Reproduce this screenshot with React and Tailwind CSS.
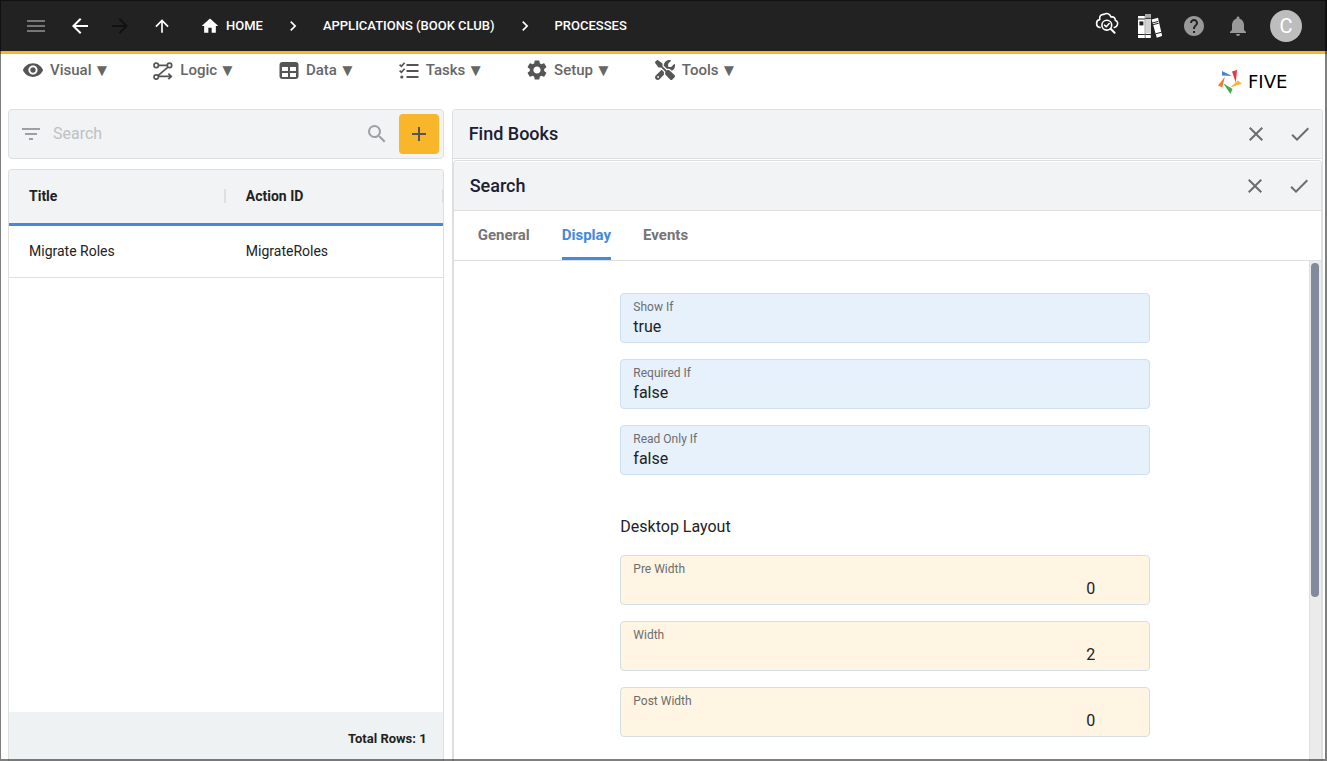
import { useState } from "react";
import {
  MdMenu,
  MdArrowBack,
  MdArrowForward,
  MdArrowUpward,
  MdHome,
  MdChevronRight,
  MdHelp,
  MdNotifications,
  MdFilterList,
  MdSearch,
  MdAdd,
  MdClose,
  MdCheck,
  MdVisibility,
  MdSettings,
} from "react-icons/md";
import { FaScrewdriverWrench } from "react-icons/fa6";

function LogicIcon() {
  return (
    <svg viewBox="0 0 20 20" className="size-5" fill="none" stroke="currentColor" strokeWidth="1.7">
      <circle cx="3.2" cy="5.4" r="2.2" />
      <circle cx="16.5" cy="5.4" r="2.2" />
      <circle cx="3.2" cy="17" r="2.2" />
      <path d="M5.4 5.4h9M15 7.1L5 15.6M5.400 16.400H18M15.400 13.600l2.900 2.800-2.900 2.800" />
    </svg>
  );
}

function DataIcon() {
  return (
    <svg viewBox="0 0 20 20" className="size-5" fill="currentColor">
      <path
        fillRule="evenodd"
        d="M3.500 2h13a3 3 0 0 1 3 3v11a3 3 0 0 1-3 3h-13a3 3 0 0 1-3-3V5a3 3 0 0 1 3-3zM3 7v4h6V7zM11 7v4h6V7zM3 13v4h6v-4zM11 13v4h6v-4z"
      />
    </svg>
  );
}

function TasksIcon() {
  return (
    <svg viewBox="0 0 20 20" className="size-5" fill="none" stroke="currentColor">
      <path strokeWidth="1.7" d="M.6 4.600l1.800 1.700L5.600 2.800M.6 10.600l1.800 1.700 3.200-3.500" />
      <path strokeWidth="2.2" d="M7.500 5h12M7.500 11h12M7.500 17h12" />
      <circle cx="2.800" cy="17" r="1.600" fill="currentColor" stroke="none" />
    </svg>
  );
}

function CloudSearchIcon() {
  return (
    <svg viewBox="-1 2 24 24" className="size-6 overflow-visible" fill="none" stroke="currentColor" strokeWidth="1.6" strokeLinecap="round" strokeLinejoin="round">
      <path d="M5 15.500C2.500 15 1.500 13.200 1.600 11.200C1.700 9.200 3 7.800 4.800 7.600C4 4.200 6.200 2 9 2.400C11.400 .6 15 1.400 16 5C18.800 4.300 20.500 6 20.200 8.200C22.400 9.200 23 11.200 22.300 13C21.800 14.400 20.800 15.200 19.300 15.500" />
      <circle cx="11.800" cy="13.200" r="4.900" />
      <path strokeWidth="2" d="M15.600 16.800l4 3.900" />
      <path d="M9.600 13.200l1.600 1.600 3-3.300" />
    </svg>
  );
}

function BooksIcon() {
  return (
    <svg viewBox="0 0 24 24" className="size-6">
      <path fill="#fff" d="M0 2h6.800v22H0zM7.400 0h5.400v24H7.400zM13.600 5.400l6.400-1.700L24.200 22l-5.400 1.700z" />
      <path fill="#a8a8a8" d="M7.400 0h5.400v4H7.400z" />
      <path fill="#d2d2d2" d="M7.400 4.800h5.400v14.400H7.400z" />
      <path fill="#222" d="M1.400 7.400h4v4h-4z" />
      <path stroke="#222" strokeWidth="1" fill="none" d="M0 5h6.800M0 20.500h6.800M7.400 4.400h5.400M7.400 20.500h5.400M14.300 9l6-1.600M14.700 10.800l6-1.600M17.600 19.800l6-1.600" />
    </svg>
  );
}

function FiveLogo() {
  return (
    <a href="#five" className="flex items-center gap-1.5 text-black">
      <svg viewBox="0 0 24 24" className="size-6">
        <path fill="#3f87db" d="M4 1v4.600L14 6z" />
        <path fill="#e53a3a" d="M14 1.500L19 0l-1.200 12.500z" />
        <path fill="#f8b62a" d="M24 13.500l-4.200-3-8 7.200z" />
        <path fill="#3fab52" d="M5.200 13.200l9.300 5.800-2 5z" />
        <path fill="#f47b2a" d="M7 6.500L0 15.500l4.200 2z" />
      </svg>
      <span className="min-w-[58px] font-['DejaVu_Sans',sans-serif] text-lg leading-6">FIVE</span>
    </a>
  );
}

const menus = [
  { name: "Visual", icon: <MdVisibility className="size-[22px] -mx-px" /> },
  { name: "Logic", icon: <LogicIcon /> },
  { name: "Data", icon: <DataIcon /> },
  { name: "Tasks", icon: <TasksIcon /> },
  { name: "Setup", icon: <MdSettings className="size-6 -mx-0.5" /> },
  { name: "Tools", icon: <FaScrewdriverWrench className="size-5" /> },
];

const tabs = ["General", "Display", "Events"];

function TopBar() {
  return (
    <header className="flex h-[54px] shrink-0 items-center justify-between border-b-3 border-[#f8b62a] bg-[#222] pl-6 pr-[25px] text-white">
      <div className="flex items-center">
        <button aria-label="Menu" className="text-[#777]"><MdMenu className="size-6" /></button>
        <button aria-label="Back" className="ml-5"><MdArrowBack className="size-6" /></button>
        <button aria-label="Forward" className="ml-4 text-[#111]"><MdArrowForward className="size-6" /></button>
        <button aria-label="Up" className="ml-5"><MdArrowUpward className="size-5" /></button>
        <nav className="ml-7 flex items-center text-[13px] leading-5 font-medium">
          <a href="#home" className="flex items-center gap-1.5"><MdHome className="size-5" />HOME</a>
          <MdChevronRight className="mx-5 size-5" />
          <a href="#applications">APPLICATIONS (BOOK CLUB)</a>
          <MdChevronRight className="mx-5 size-5" />
          <a href="#processes">PROCESSES</a>
        </nav>
      </div>
      <div className="flex items-center gap-5">
        <button aria-label="Inspect"><CloudSearchIcon /></button>
        <button aria-label="Library"><BooksIcon /></button>
        <button aria-label="Help" className="text-[#999]"><MdHelp className="size-6" /></button>
        <button aria-label="Notifications" className="text-[#999]"><MdNotifications className="size-6" /></button>
        <button className="flex size-8 items-center justify-center rounded-full bg-[#bdbdbd] text-xl">C</button>
      </div>
    </header>
  );
}

function MenuBar() {
  return (
    <div className="flex h-[55px] shrink-0 items-start justify-between pl-[23px] pr-[21px]">
      <nav className="flex gap-[43px]">
        {menus.map((item) => (
          <button key={item.name} className="flex h-8 items-center text-[15px] font-medium text-[#666]">
            <span className="mr-[7px] text-[#555]">{item.icon}</span>
            {item.name}
            <span className="ml-0.5 text-[17px] leading-none">▼</span>
          </button>
        ))}
      </nav>
      <div className="pt-4">
        <FiveLogo />
      </div>
    </div>
  );
}

function ActionList() {
  const [search, setSearch] = useState("");

  return (
    <div className="flex min-h-0 flex-col gap-2.5">
      <div className="flex h-[50px] shrink-0 items-center rounded-sm border border-[#dedfe0] bg-[#f1f3f4] pl-2.5 pr-1">
        <button aria-label="Filter" className="text-[#9aa0a6]"><MdFilterList className="size-6" /></button>
        <input
          type="text"
          aria-label="Search"
          placeholder="Search"
          className="ml-2.5 min-w-0 flex-1 bg-transparent text-base text-[#222] outline-none placeholder:text-[#bfc1c3]"
          value={search}
          onChange={(e) => setSearch(e.target.value)}
        />
        <button aria-label="Run search" className="text-[#9aa0a6]"><MdSearch className="size-6" /></button>
        <button aria-label="Add" className="ml-2.5 flex size-10 items-center justify-center rounded-sm bg-[#f8b62a] text-[#555]">
          <MdAdd className="size-6" />
        </button>
      </div>
      <div className="flex min-h-0 flex-1 flex-col overflow-hidden rounded-t-sm border border-b-0 border-[#dedfe0]">
        <table className="w-full table-fixed text-left text-sm text-[#222]">
          <thead>
            <tr className="h-[54px] border-b-3 border-[#4489dc] bg-[#f1f3f4]">
              <th className="p-0 font-bold">
                <div className="border-r-2 border-[#dedfe0] pl-5 leading-[14px]">Title</div>
              </th>
              <th className="p-0 font-bold">
                <div className="border-r border-[#dedfe0] pl-5 leading-[14px]">Action ID</div>
              </th>
            </tr>
          </thead>
          <tbody>
            <tr className="h-[53px] border-b border-[#e0e0e0]">
              <td className="p-0 pl-5">Migrate Roles</td>
              <td className="p-0 pl-5">MigrateRoles</td>
            </tr>
          </tbody>
        </table>
        <div className="mt-auto flex h-[49px] items-center justify-end bg-[#eef2f3] pr-4 pt-1 text-[13px] font-bold text-[#222]">
          Total Rows: 1
        </div>
      </div>
    </div>
  );
}

function PanelHeader({ title }) {
  return (
    <div className="flex h-[49px] shrink-0 items-center justify-between border-b border-[#dedfe0] bg-[#f1f3f4] pl-4 pr-2.5">
      <h2 className="text-lg font-medium text-[#1a2033]">{title}</h2>
      <div className="flex gap-5 text-[#6d6d6d]">
        <button aria-label={"Close " + title}><MdClose className="size-6" /></button>
        <button aria-label={"Save " + title}><MdCheck className="size-6" /></button>
      </div>
    </div>
  );
}

function ConditionField({ id, label, value }) {
  return (
    <div className="flex h-[50px] flex-col rounded-sm border border-[#cfdfee] bg-[#e7f1fc] px-3 pt-[5px]">
      <label htmlFor={id} className="text-xs leading-4 text-[#6d6d6d]">{label}</label>
      <input id={id} type="text" defaultValue={value} className="h-6 w-full bg-transparent text-base text-[#222] outline-none" />
    </div>
  );
}

function NumberField({ id, label, value }) {
  return (
    <div className="flex h-[50px] flex-col rounded-sm border border-[#d3dfe8] bg-[#fff5e2] px-3 pt-[5px]">
      <label htmlFor={id} className="text-xs leading-4 text-[#6d6d6d]">{label}</label>
      <input id={id} type="text" inputMode="numeric" defaultValue={value} className="h-6 w-full bg-transparent pr-[42px] text-right text-base text-[#222] outline-none" />
    </div>
  );
}

function DisplayForm() {
  return (
    <form className="flex-1 overflow-hidden pl-2 pt-8">
      <div className="mx-auto flex w-full max-w-[530px] flex-col gap-4">
        <ConditionField id="showIf" label="Show If" value="true" />
        <ConditionField id="requiredIf" label="Required If" value="false" />
        <ConditionField id="readOnlyIf" label="Read Only If" value="false" />
        <h3 className="mt-6 text-base text-[#222]">Desktop Layout</h3>
        <NumberField id="preWidth" label="Pre Width" value="0" />
        <NumberField id="width" label="Width" value="2" />
        <NumberField id="postWidth" label="Post Width" value="0" />
      </div>
    </form>
  );
}

function App() {
  const [tab, setTab] = useState("Display");

  return (
    <div className="relative flex h-screen flex-col overflow-hidden bg-white font-[Roboto,sans-serif] after:pointer-events-none after:absolute after:inset-0 after:border after:border-b-2 after:border-r-2 after:border-black/50">
      <TopBar />
      <MenuBar />
      <main className="grid min-h-0 flex-1 grid-cols-[1fr_2fr] gap-2 pl-2 pr-1">
        <ActionList />
        <div className="flex min-h-0 flex-col overflow-hidden rounded-t-sm border border-b-0 border-[#dedfe0]">
          <PanelHeader title="Find Books" />
          <section className="mt-px flex min-h-0 flex-1 flex-col overflow-hidden rounded-t-sm border border-b-0 border-[#dedfe0] pt-px">
            <PanelHeader title="Search" />
            <div className="flex h-[50px] shrink-0 gap-8 border-b border-[#dedfe0] pl-6">
              {tabs.map((name) => (
                <button
                  key={name}
                  onClick={() => setTab(name)}
                  className={
                    tab === name
                      ? "border-b-3 border-[#4489dc] pt-0.5 text-[15px] font-bold text-[#4489dc]"
                      : "border-b-3 border-transparent pt-0.5 text-[15px] font-bold text-[#757575]"
                  }
                >
                  {name}
                </button>
              ))}
            </div>
            <div className="flex min-h-0 flex-1">
              <DisplayForm />
              <div className="w-3 shrink-0 border-l border-[#dedfe0] bg-[#ebebeb] pl-px pt-0.5">
                <div className="h-[67%] w-2 rounded-full bg-[#838a9b]" />
              </div>
            </div>
          </section>
        </div>
      </main>
    </div>
  );
}

export default App;
